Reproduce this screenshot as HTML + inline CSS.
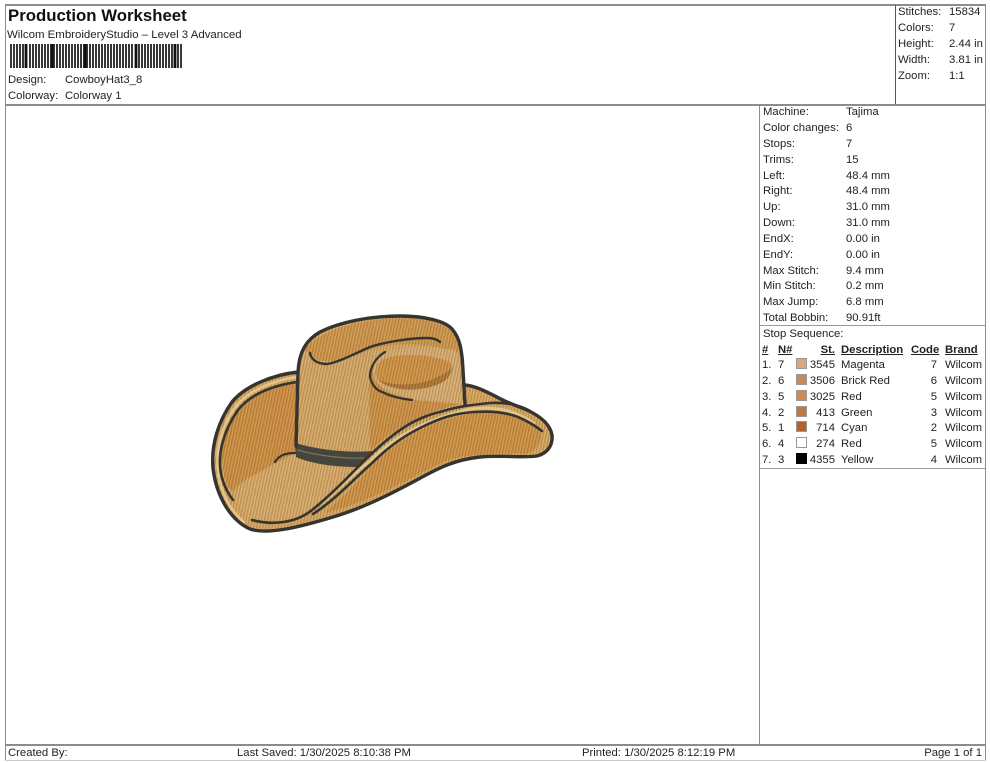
<!DOCTYPE html>
<html><head><meta charset="utf-8"><title>Production Worksheet</title>
<style>
html,body{margin:0;padding:0;background:#fff}
#p{position:relative;width:990px;height:762px;overflow:hidden;background:#fff;font:11.3px/14px "Liberation Sans",Arial,sans-serif;color:#222}
#p i{position:absolute;font-style:normal;white-space:nowrap}
#p i.r{text-align:right}
#p i.u{font-weight:bold;text-decoration:underline}
.ln{position:absolute;background:#8c8c8c}
.sw{position:absolute;left:796px;width:9px;height:9px;border:1px solid #999}
svg{position:absolute;left:0;top:0}
</style></head><body><div id="p">
<div class="ln" style="left:5px;top:4px;width:981px;height:2px"></div>
<div class="ln" style="left:5px;top:4px;width:1px;height:756px"></div>
<div class="ln" style="left:985px;top:4px;width:1px;height:756px"></div>
<div class="ln" style="left:5px;top:104px;width:981px;height:2px"></div>
<div class="ln" style="left:895px;top:5px;width:1px;height:99px;background:#555"></div>
<div class="ln" style="left:759px;top:104px;width:1px;height:640px"></div>
<div class="ln" style="left:759px;top:325px;width:227px;height:1px;background:#999"></div>
<div class="ln" style="left:759px;top:468px;width:227px;height:1px;background:#999"></div>
<div class="ln" style="left:5px;top:744px;width:981px;height:2px"></div>
<div class="ln" style="left:5px;top:760px;width:981px;height:1px;background:#ccc"></div>

<i style="left:8px;top:6px;font-size:16.8px;line-height:20px;font-weight:bold;color:#111">Production Worksheet</i>
<i style="left:7px;top:27.500px;font-size:11.45px">Wilcom EmbroideryStudio – Level 3 Advanced</i>
<svg width="990" height="762" viewBox="0 0 990 762" style="pointer-events:none"><path stroke="#222" fill="none" stroke-width="1.800" d="M11 44v24M14 44v24M17 44v24M20 44v24M23 44v24M26 44v24M30 44v24M33 44v24M36 44v24M39 44v24M42 44v24M45 44v24M48 44v24M51 44v24M54 44v24M57 44v24M60 44v24M63 44v24M66 44v24M69 44v24M72 44v24M75 44v24M78 44v24M81 44v24M84 44v24M87 44v24M90 44v24M93 44v24M96 44v24M99 44v24M102 44v24M105 44v24M108 44v24M111 44v24M114 44v24M117 44v24M120 44v24M123 44v24M126 44v24M129 44v24M132 44v24M136 44v24M139 44v24M142 44v24M145 44v24M148 44v24M151 44v24M154 44v24M157 44v24M160 44v24M163 44v24M166 44v24M169 44v24M172 44v24M175 44v24M178 44v24M181 44v24"/><path stroke="#111" stroke-width="2.800" d="M26 44v24M52 44v24M85 44v24M136 44v24M175 44v24" fill="none"/></svg>
<i style="left:8px;top:72.500px">Design:</i><i style="left:65px;top:72.500px">CowboyHat3_8</i>
<i style="left:8px;top:88.500px">Colorway:</i><i style="left:65px;top:88.500px">Colorway 1</i>

<i style="left:898px;top:5px">Stitches:</i><i style="left:949px;top:5px">15834</i>
<i style="left:898px;top:21px">Colors:</i><i style="left:949px;top:21px">7</i>
<i style="left:898px;top:37px">Height:</i><i style="left:949px;top:37px">2.44 in</i>
<i style="left:898px;top:52.500px">Width:</i><i style="left:949px;top:52.500px">3.81 in</i>
<i style="left:898px;top:68.500px">Zoom:</i><i style="left:949px;top:68.500px">1:1</i>

<i style="left:763px;top:105px">Machine:</i><i style="left:846px;top:105px">Tajima</i>
<i style="left:763px;top:120.500px">Color changes:</i><i style="left:846px;top:120.500px">6</i>
<i style="left:763px;top:136.500px">Stops:</i><i style="left:846px;top:136.500px">7</i>
<i style="left:763px;top:152.500px">Trims:</i><i style="left:846px;top:152.500px">15</i>
<i style="left:763px;top:168.500px">Left:</i><i style="left:846px;top:168.500px">48.4 mm</i>
<i style="left:763px;top:183.500px">Right:</i><i style="left:846px;top:183.500px">48.4 mm</i>
<i style="left:763px;top:199.500px">Up:</i><i style="left:846px;top:199.500px">31.0 mm</i>
<i style="left:763px;top:215.500px">Down:</i><i style="left:846px;top:215.500px">31.0 mm</i>
<i style="left:763px;top:231.500px">EndX:</i><i style="left:846px;top:231.500px">0.00 in</i>
<i style="left:763px;top:247.500px">EndY:</i><i style="left:846px;top:247.500px">0.00 in</i>
<i style="left:763px;top:263.500px">Max Stitch:</i><i style="left:846px;top:263.500px">9.4 mm</i>
<i style="left:763px;top:278.500px">Min Stitch:</i><i style="left:846px;top:278.500px">0.2 mm</i>
<i style="left:763px;top:294.500px">Max Jump:</i><i style="left:846px;top:294.500px">6.8 mm</i>
<i style="left:763px;top:310.500px">Total Bobbin:</i><i style="left:846px;top:310.500px">90.91ft</i>
<i style="left:763px;top:326.500px">Stop Sequence:</i>

<i class="u" style="left:762px;top:342.500px">#</i><i class="u" style="left:778px;top:342.500px">N#</i><i class="u r" style="right:155px;top:342.500px">St.</i><i class="u" style="left:841px;top:342.500px">Description</i><i class="u" style="left:911px;top:342.500px">Code</i><i class="u" style="left:945px;top:342.500px">Brand</i>

<i style="left:762px;top:358px">1.</i><i style="left:778px;top:358px">7</i><span class="sw" style="top:358px;background:#dda480"></span><i class="r" style="right:155px;top:358px">3545</i><i style="left:841px;top:358px">Magenta</i><i class="r" style="right:53px;top:358px">7</i><i style="left:945px;top:358px">Wilcom</i>
<i style="left:762px;top:373.500px">2.</i><i style="left:778px;top:373.500px">6</i><span class="sw" style="top:374px;background:#c88a5a"></span><i class="r" style="right:155px;top:373.500px">3506</i><i style="left:841px;top:373.500px">Brick Red</i><i class="r" style="right:53px;top:373.500px">6</i><i style="left:945px;top:373.500px">Wilcom</i>
<i style="left:762px;top:389.500px">3.</i><i style="left:778px;top:389.500px">5</i><span class="sw" style="top:390px;background:#d08b55"></span><i class="r" style="right:155px;top:389.500px">3025</i><i style="left:841px;top:389.500px">Red</i><i class="r" style="right:53px;top:389.500px">5</i><i style="left:945px;top:389.500px">Wilcom</i>
<i style="left:762px;top:405.500px">4.</i><i style="left:778px;top:405.500px">2</i><span class="sw" style="top:406px;background:#c0763f"></span><i class="r" style="right:155px;top:405.500px">413</i><i style="left:841px;top:405.500px">Green</i><i class="r" style="right:53px;top:405.500px">3</i><i style="left:945px;top:405.500px">Wilcom</i>
<i style="left:762px;top:421px">5.</i><i style="left:778px;top:421px">1</i><span class="sw" style="top:421px;background:#b5602f"></span><i class="r" style="right:155px;top:421px">714</i><i style="left:841px;top:421px">Cyan</i><i class="r" style="right:53px;top:421px">2</i><i style="left:945px;top:421px">Wilcom</i>
<i style="left:762px;top:436.500px">6.</i><i style="left:778px;top:436.500px">4</i><span class="sw" style="top:437px;background:#fff"></span><i class="r" style="right:155px;top:436.500px">274</i><i style="left:841px;top:436.500px">Red</i><i class="r" style="right:53px;top:436.500px">5</i><i style="left:945px;top:436.500px">Wilcom</i>
<i style="left:762px;top:452.500px">7.</i><i style="left:778px;top:452.500px">3</i><span class="sw" style="top:453px;background:#000;border-color:#000"></span><i class="r" style="right:155px;top:452.500px">4355</i><i style="left:841px;top:452.500px">Yellow</i><i class="r" style="right:53px;top:452.500px">4</i><i style="left:945px;top:452.500px">Wilcom</i>

<i style="left:8px;top:745.500px">Created By:</i>
<i style="left:237px;top:745.500px">Last Saved: 1/30/2025 8:10:38 PM</i>
<i style="left:582px;top:745.500px">Printed: 1/30/2025 8:12:19 PM</i>
<i class="r" style="right:8px;top:745.500px">Page 1 of 1</i>

<svg width="990" height="762" viewBox="0 0 990 762">
<defs>
<pattern id="st" width="3" height="3" patternUnits="userSpaceOnUse" patternTransform="rotate(12)">
<rect width="1.200" height="3" fill="#7a4a18" opacity=".28"/><rect x="1.800" width="1" height="3" fill="#f0d6a8" opacity=".25"/>
</pattern>
<clipPath id="c1"><path d="M298 372C272 375 245 386 232 402C218 422 211 445 213 468C216 495 230 520 250 529C268 535 300 527 333 517C360 509 385 497 413 482C435 470 452 460 480 457C500 455 525 458 537 456C548 453 553 445 552 435C550 424 540 416 527 410C515 405 505 402 495 396C485 391 475 386 465 385Z"/></clipPath>
<clipPath id="c2"><path d="M296 448L298 372C299 352 306 340 320 332C340 322 370 316 400 316C425 316 445 321 452 329C460 338 462 350 463 370L465 407L372 456Z"/></clipPath>
</defs>
<!-- brim silhouette -->
<path d="M298 372C272 375 245 386 232 402C218 422 211 445 213 468C216 495 230 520 250 529C268 535 300 527 333 517C360 509 385 497 413 482C435 470 452 460 480 457C500 455 525 458 537 456C548 453 553 445 552 435C550 424 540 416 527 410C515 405 505 402 495 396C485 391 475 386 465 385Z" fill="#d3a35f"/>
<!-- underside left -->
<path d="M297 382C270 386 248 396 235 412C222 432 218 462 228 487L233 492C240 480 255 475 274 464L296 452Z" fill="#c98b3f"/>
<path d="M297 384C278 388 262 395 256 402C272 412 280 430 278 458L296 450Z" fill="#cb8a40"/>
<!-- front brim light -->
<path d="M236 492C245 480 260 472 274 464L295 454C320 468 345 470 368 468C350 482 330 500 312 510C290 522 265 522 250 518C240 510 236 500 236 492Z" fill="#d4a868"/>
<!-- front brim right -->
<path d="M372 466C395 442 430 420 470 414C500 411 525 418 540 430C545 440 535 452 525 454C500 453 470 453 445 461C410 478 375 500 325 513C345 495 360 480 372 466Z" fill="#cb8d40"/>
<path d="M468 388C482 391 495 397 505 404L466 404Z" fill="#d6a45c"/>
<rect x="205" y="365" width="350" height="170" fill="url(#st)" clip-path="url(#c1)"/>
<!-- crown -->
<path d="M296 448L298 372C299 352 306 340 320 332C340 322 370 316 400 316C425 316 445 321 452 329C460 338 462 350 463 370L465 405C430 410 395 425 372 456C345 458 315 455 296 448Z" fill="#d2a566"/>
<path d="M304 350C318 333 350 320 400 318C425 318 445 322 452 332C457 339 459 345 459 352C420 342 390 342 365 352C340 362 318 365 312 355Z" fill="#ca9349"/>
<path d="M369 368C385 390 395 395 412 400L462 404C430 410 395 425 370 452Z" fill="#c98d42"/>
<path d="M380 354C400 346 430 346 455 350C459 365 461 385 462 404L412 398C395 396 380 390 374 378C372 366 376 360 380 354Z" fill="#d4ab72"/>
<path d="M382 360C400 352 430 354 450 362C456 370 450 378 440 382C420 388 395 388 378 380C374 372 376 366 382 360Z" fill="#cc8f42"/>
<path d="M378 380C400 388 430 386 452 368C450 378 445 383 430 387C410 392 390 390 378 380Z" fill="#a66f30"/>
<rect x="296" y="315" width="170" height="145" fill="url(#st)" clip-path="url(#c2)"/>
<!-- band -->
<path d="M295 443C320 450 345 453 374 451L357 467C335 467 312 464 296 457Z" fill="#45453c"/>
<path d="M297 450C320 456 345 459 364 458" stroke="#777661" stroke-width="1.200" fill="none"/>
<!-- light strips -->
<g fill="none" stroke="#e2c48e">
<path d="M297 377C272 381 250 390 236 406C222 425 215 450 218 472C221 492 229 510 245 523" stroke-width="2.500"/>
<path d="M370 461C395 436 425 420 470 409C495 406 515 410 535 424" stroke-width="3"/>
<path d="M322 503C340 488 355 472 370 461" stroke-width="2.500"/>
</g>
<!-- outlines -->
<g fill="none" stroke="#35342e" stroke-linecap="round" stroke-linejoin="round">
<path d="M298 372C272 375 245 386 232 402C218 422 211 445 213 468C216 495 230 520 250 529C268 535 300 527 333 517C360 509 385 497 413 482C435 470 452 460 480 457C500 455 525 458 537 456C548 453 553 445 552 435C550 424 540 416 527 410C515 405 505 402 495 396C485 391 475 386 465 385" stroke-width="3.400"/>
<path d="M296 446L298 372C299 352 306 340 320 332C340 322 370 316 400 316C425 316 445 321 452 329C460 338 462 350 463 370L465 404" stroke-width="3.400"/>
<path d="M297 382C270 386 250 395 238 410C224 430 216 455 222 478C225 488 229 495 233 500" stroke-width="2.600"/>
<path d="M275 462C279 455 286 453 295 453" stroke-width="2.200"/>
<path d="M252 520C270 525 295 524 312 510C330 496 345 480 357 468C370 455 385 440 403 428C415 420 430 414 440 412C455 407 470 405 490 403C505 402 520 405 530 411" stroke-width="2.600"/>
<path d="M313 514C335 500 355 478 370 465C385 450 400 438 420 428C440 418 455 413 475 412C490 411 505 412 518 417C530 422 538 428 542 431" stroke-width="2.600"/>
<path d="M310 353C311 360 318 364 327 364C340 362 358 352 370 347C385 342 410 338 427 338C433 338 437 339 440 342" stroke-width="2.400"/>
<path d="M385 352C375 358 370 368 370 377C372 385 376 390 382 392C392 397 402 399 412 400" stroke-width="2.200"/>
</g>
</svg>
</div></body></html>
